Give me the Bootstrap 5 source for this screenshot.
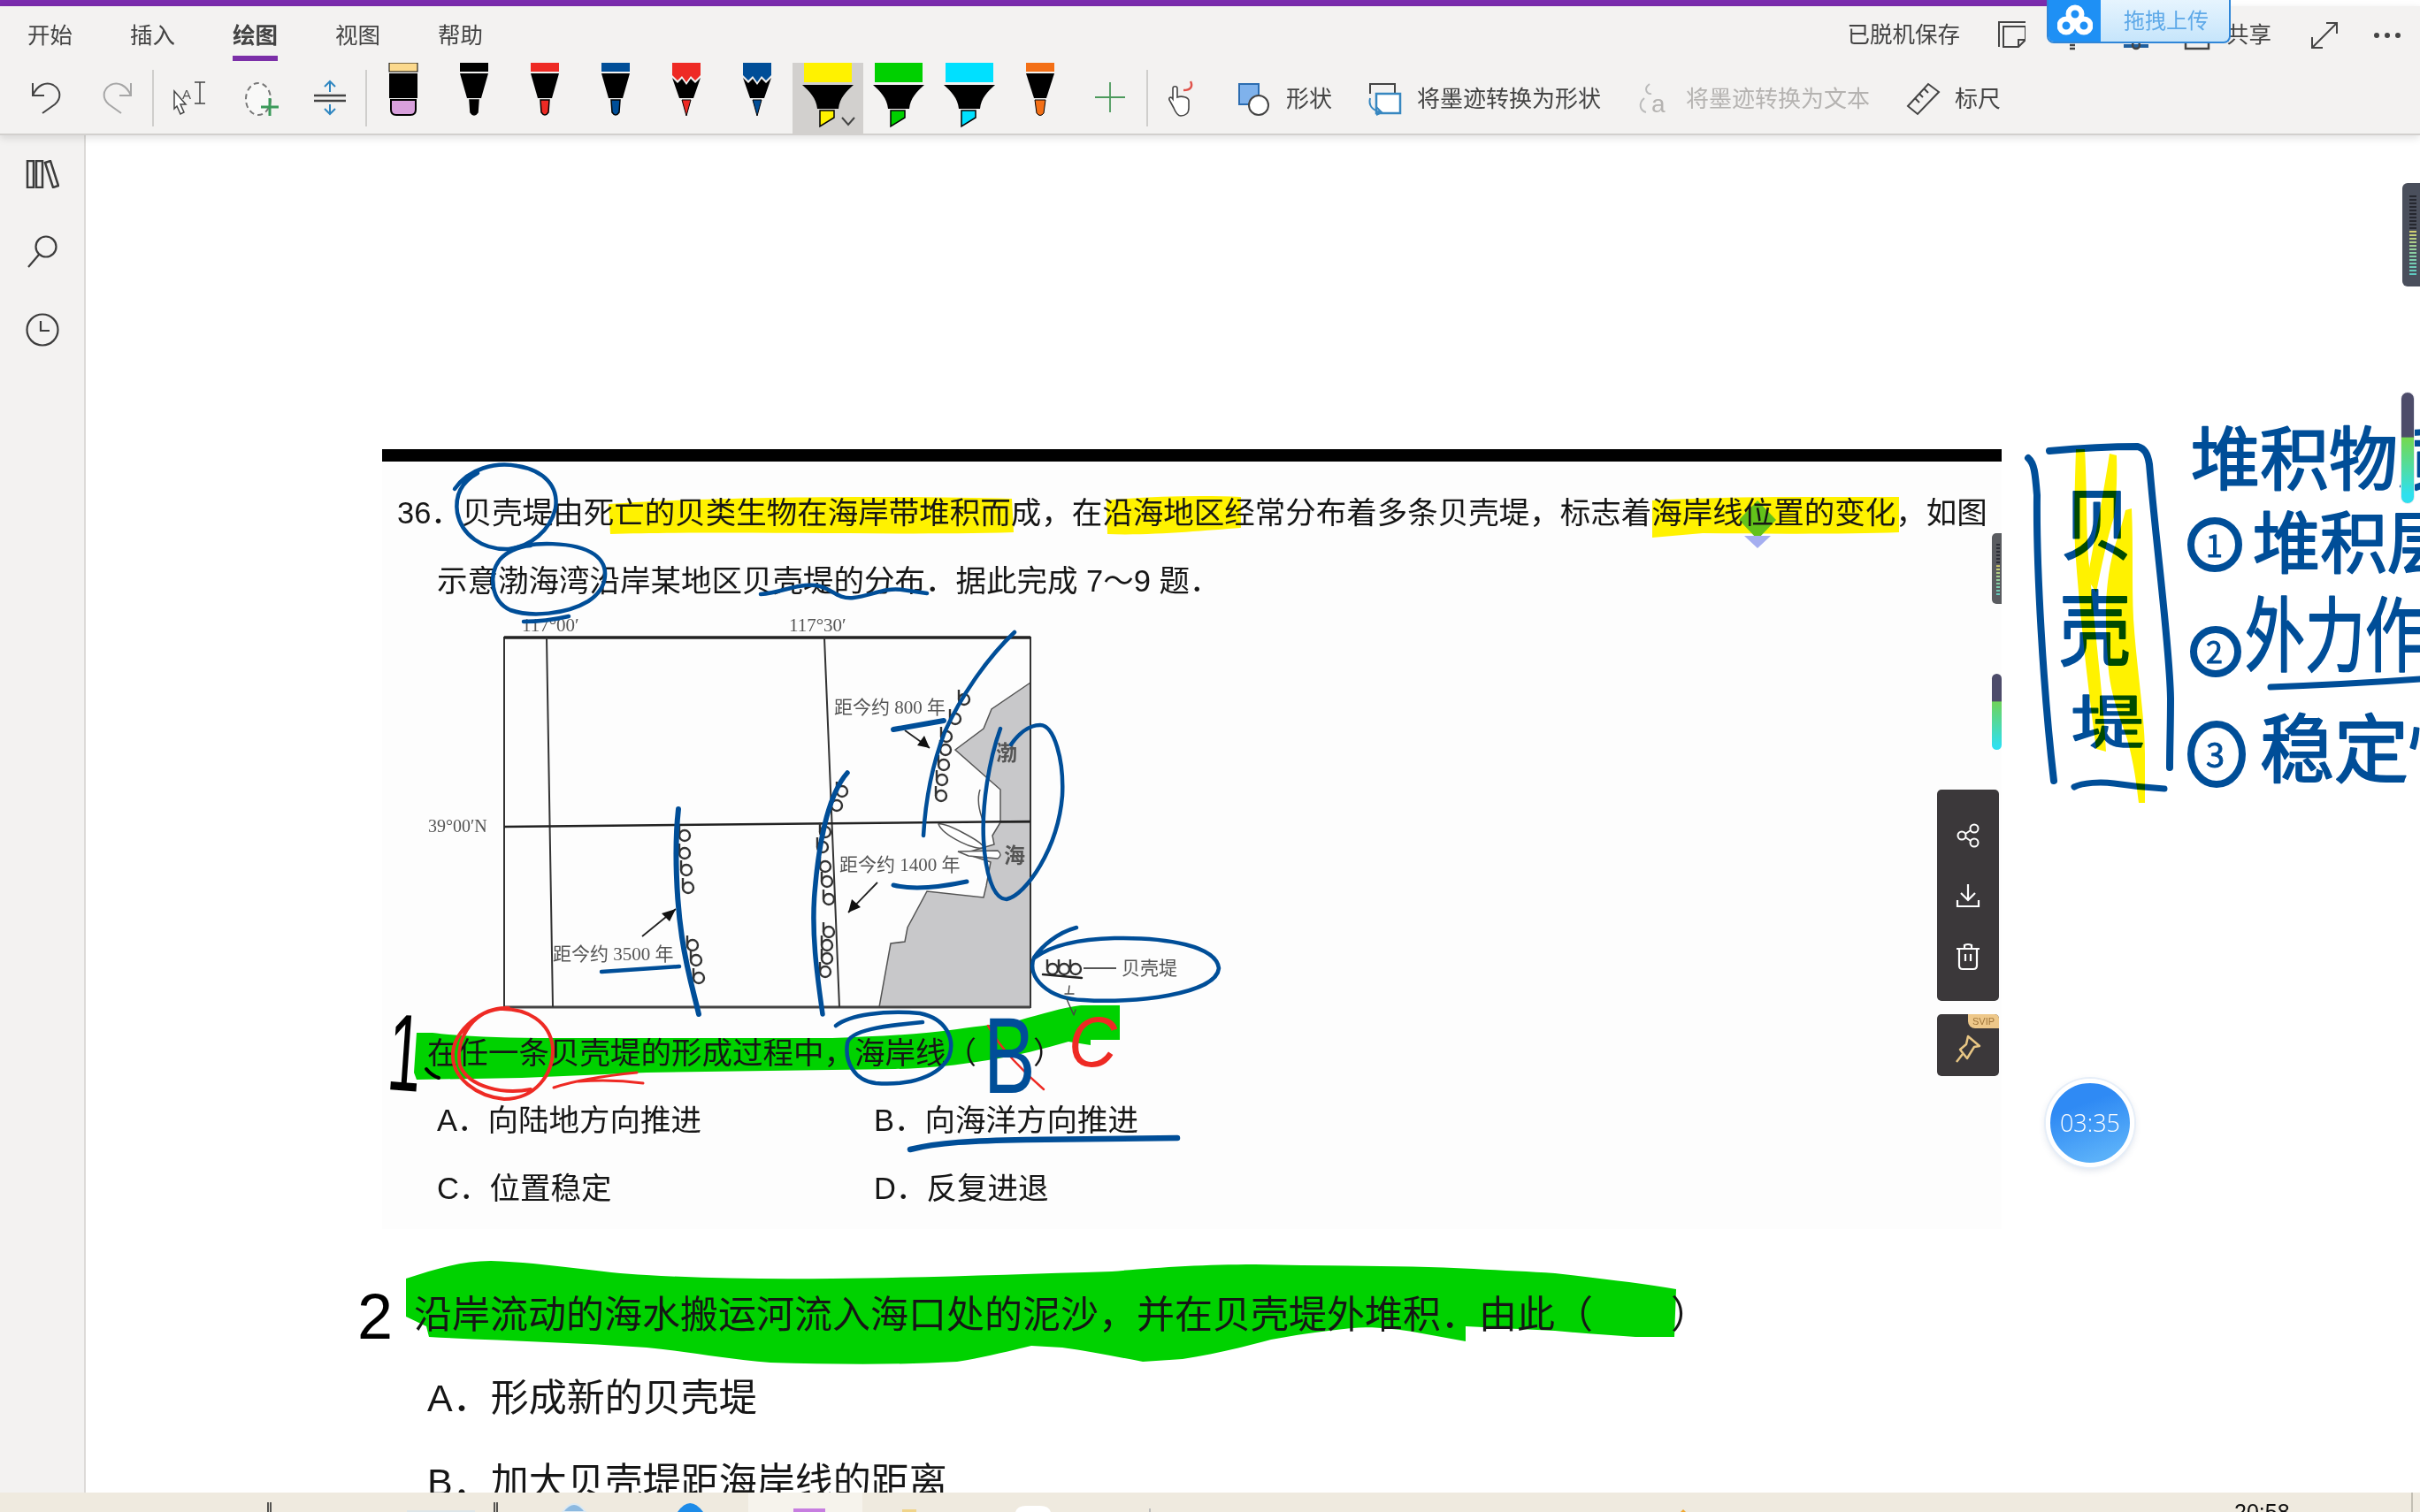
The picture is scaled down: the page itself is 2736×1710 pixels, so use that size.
<!DOCTYPE html>
<html lang="zh-CN">
<head>
<meta charset="UTF-8">
<title>OneNote</title>
<link rel="stylesheet" href="https://cdn.jsdelivr.net/npm/bootstrap@5.3.3/dist/css/bootstrap.min.css">
<style>
    html, body { width: 2736px; height: 1710px; overflow: hidden; background: #fff; }
    body { font-family: "Liberation Sans", "Noto Sans CJK SC", sans-serif; color: #444; }
    svg { display: block; }

    .app-shell { width: 2736px; height: 1710px; position: relative; }
    .top-strip { height: 7px; width: 2320px; background: #7b2cae; }
    .ribbon { height: 146px; background: #f3f2f1; border-bottom: 2px solid #d2d0ce; box-shadow: 0 3px 9px rgba(0,0,0,.12); position: relative; z-index: 3; }
    .ribbon-tabs { height: 64px; padding-left: 31px; padding-top: 2px; font-size: 25.5px; }
    .tab-list { gap: 65px; }
    .tab-list .nav-link { padding: 0; color: #444; line-height: 40px; position: relative; }
    .tab-list .nav-link.current { font-weight: 700; }
    .tab-list .nav-link.current::after { content: ""; position: absolute; left: 0; right: 0; top: 43px; height: 6px; background: #7b2fa8; }
    .window-tools { padding-right: 22px; font-size: 25.5px; line-height: 1; }
    .saved-note { margin-right: 42px; }
    .expand-gap { margin: 0 41px 0 45px; }
    .ribbon-tools { height: 80px; }
    .tool-labels { gap: 42px; margin-left: 30px; padding-top: 2px; font-size: 26px; color: #444; }
    .tool-labels .off { color: #b5b3b1; }
    .tool-labels svg { overflow: visible; }
    .tool-item { gap: 18px; }

    .workspace { height: 1535px; }
    .side-rail { width: 97px; background: #f3f2f1; border-right: 2px solid #dcdad8; }
    .rail-btn { height: 88px; }
    .note-canvas { width: 2639px; height: 1535px; position: relative; overflow: hidden; background: #fff; }
    .ink-layer { position: absolute; left: 0; top: 0; pointer-events: none; }
    .ink-layer text { font-family: "Noto Sans CJK SC", sans-serif; }
    .ink-layer .latin-ink text { font-family: "Liberation Sans", sans-serif; }
    .marker-layer { mix-blend-mode: multiply; }

    .doc-sheet { position: absolute; left: 335px; top: 355px; width: 1831px; height: 1180px; color: #161616; font-family: "Liberation Sans", "Noto Sans CJK SC", sans-serif; }
    .doc-rule { height: 14px; background: #000; }
    .q-line { font-size: 34.5px; line-height: 77px; white-space: nowrap; }
    .q-first { margin-top: 20px; padding-left: 17px; }
    .q-second { padding-left: 62px; }
    .q-stem { padding-left: 51px; line-height: 75px; }
    .q-opts { padding-left: 62px; }
    .q-opts > div { width: 494px; }
    .paren-gap { display: inline-block; width: 64px; }
    .q-big { font-size: 43px; line-height: 95px; white-space: nowrap; }
    .q-big-stem { margin-top: 58px; line-height: 93px; padding-left: 36px; }
    .q-big-opt { padding-left: 51px; }
    .paren-gap-big { display: inline-block; width: 88px; }
    .map-art { margin-top: -2px; margin-bottom: 2px; }
    .map-art text { font-family: "Liberation Serif", "Noto Sans CJK SC", serif; fill: #555; }

    .float-panel { position: absolute; left: 2093px; width: 70px; background: #3b383a; border-radius: 5px; z-index: 2; }
    .panel-actions { top: 740px; height: 239px; padding: 37px 0 34px; }
    .panel-pin { top: 994px; height: 70px; }
    .svip-tag { position: absolute; right: 0; top: 0; width: 35px; height: 16px; background: #eec88a; border-radius: 0 5px 0 8px; color: #a0763c; font: 11px/16px "Liberation Sans", sans-serif; text-align: center; }
    .timer-ball { position: absolute; left: 2216px; top: 1067px; width: 100px; height: 100px; border-radius: 50%; border: 5px solid #fff; background: linear-gradient(160deg, #2f8af4 30%, #5ab0f9 85%); box-shadow: 0 0 0 2px #e6eef8, 0 3px 8px rgba(60,90,140,.2); color: #fff; font: 300 27px/90px "Open Sans", sans-serif; text-align: center; z-index: 2; }
    .meter { position: absolute; z-index: 2; }
    .meter-doc-a { left: 2155px; top: 450px; width: 11px; height: 80px; background: #5a5c60; border-radius: 5px 0 0 5px; }
    .meter-doc-a::after { content: ""; position: absolute; left: 5px; top: 12px; width: 4px; height: 60px; background: repeating-linear-gradient(transparent 0 2px, #5a5c60 2px 4px), linear-gradient(#2c2e36 40%, #d8cf6a 41%, #8fd0a0 70%, #5cc8c0); }
    .meter-doc-b { left: 2155px; top: 609px; width: 11px; height: 86px; border-radius: 6px; background: linear-gradient(#4d4c6a 36%, #6fd35a 37%, #2fe0ee 95%); }
    .meter-side-a { left: 2619px; top: 54px; width: 20px; height: 117px; background: #4a4f5c; border-radius: 6px 0 0 6px; }
    .meter-side-a::after { content: ""; position: absolute; left: 8px; top: 14px; width: 8px; height: 90px; background: repeating-linear-gradient(transparent 0 2px, #4a4f5c 2px 4px), linear-gradient(#262830 42%, #d8cf6a 43%, #8fd0a0 70%, #5cc8c0); }
    .meter-side-b { left: 2617px; top: 290px; width: 16px; height: 127px; border-radius: 8px; background: linear-gradient(#4d4c6a 40%, #74d94f 41%, #2fe0ee 92%); border: 1px solid #e8e8ee; }

    .drop-box { position: absolute; left: 2314px; top: 0; width: 208px; height: 49px; border: 2px solid #2f86d8; border-top: 0; border-radius: 0 0 8px 8px; overflow: hidden; z-index: 5; background: linear-gradient(#e6f4fe, #c6e5fb); color: #5ea9e8; font-size: 24px; }
    .drop-icon { width: 59px; background: #1e90f5; }
    .drop-label { padding-left: 26px; }

    .task-strip { height: 22px; background: #efeadf; position: relative; z-index: 3; }
    .task-strip text { font-family: "Liberation Sans", sans-serif; }
</style>
</head>
<body>
<div class="app-shell d-flex flex-column">
    <div class="top-strip"></div>

    <header class="ribbon">
        <div class="ribbon-tabs d-flex align-items-center">
            <ul class="nav tab-list">
                <li class="nav-item"><a class="nav-link" href="#">开始</a></li>
                <li class="nav-item"><a class="nav-link" href="#">插入</a></li>
                <li class="nav-item"><a class="nav-link current" href="#">绘图</a></li>
                <li class="nav-item"><a class="nav-link" href="#">视图</a></li>
                <li class="nav-item"><a class="nav-link" href="#">帮助</a></li>
            </ul>
            <div class="window-tools ms-auto d-flex align-items-center">
                <span class="saved-note">已脱机保存</span>
                <svg width="32" height="32" viewBox="2258 23 32 32" fill="none" stroke="#444" stroke-width="2">
                    <path d="M2260 52V24H2290M2265 52V29H2290V44L2282 52Z"/><path d="M2282 52V44H2290"/>
                </svg>
                <svg width="227" height="64" viewBox="2295 7 227 64" fill="none" stroke="#444" stroke-width="2.5">
                    <path d="M2345 50H2351M2345 54H2351"/><path d="M2406 51H2434" stroke="#1f5f9e" stroke-width="4"/><circle cx="2420" cy="50" r="4"/><path d="M2476 46V54H2502V46"/>
                </svg>
                <span>共享</span>
                <svg class="expand-gap" width="30" height="30" viewBox="2613 24 30 30" fill="none" stroke="#444" stroke-width="2">
                    <path d="M2614 53L2642 25M2630 25H2642V37M2614 41V53H2626"/>
                </svg>
                <svg width="30" height="8" viewBox="2684 34 30 8" fill="#444">
                    <circle cx="2687" cy="38" r="3"/><circle cx="2699" cy="38" r="3"/><circle cx="2711" cy="38" r="3"/>
                </svg>
            </div>
        </div>

        <div class="ribbon-tools d-flex align-items-center">
            <svg width="1370" height="80" viewBox="0 71 1370 80">
                <defs>
                    <symbol id="pen-fine" viewBox="0 0 32 60" width="32" height="60" overflow="visible">
                        <rect x="0" y="0" width="32" height="10" fill="currentColor"/>
                        <path d="M0 12H32L24 40H8Z" fill="#000"/>
                        <path d="M11 42H21L20 56Q16 62 12 56Z" fill="currentColor" stroke="#000" stroke-width="1.5"/>
                    </symbol>
                    <symbol id="pen-rough" viewBox="0 0 32 60" width="32" height="60" overflow="visible">
                        <path d="M0 0H32V14L26 20L21 15L16 22L11 15L6 20L0 14Z" fill="currentColor"/>
                        <path d="M0 17L6 23L11 18L16 25L21 18L26 23L32 17L24 40H8Z" fill="#000"/>
                        <path d="M11 42H21L16 60Z" fill="currentColor" stroke="#000" stroke-width="1"/>
                    </symbol>
                    <symbol id="pen-marker" viewBox="0 0 58 72" width="58" height="72" overflow="visible">
                        <rect x="2" y="0" width="54" height="22" fill="currentColor"/>
                        <path d="M0 25H58C50 32 42 40 41 52H17C16 40 8 32 0 25Z" fill="#000"/>
                        <path d="M20 54H36V62L20 72Z" fill="currentColor" stroke="#000" stroke-width="1.5"/>
                    </symbol>
                </defs>
                <!-- undo, redo -->
                <path d="M37 94V108H50M37 108C42 96 52 92 60 96C70 102 69 112 62 118L48 128" fill="none" stroke="#444" stroke-width="2"/>
                <path d="M148 94V108H135M148 108C143 96 133 92 125 96C115 102 116 112 123 118L137 128" fill="none" stroke="#a6a6a6" stroke-width="2"/>
                <path d="M173 79V143M414 79V143M1297 79V143" stroke="#c4c2c0" stroke-width="1.5"/>
                <!-- select, lasso, insert space -->
                <path d="M197 103L210 118H204L208 127L204 129L200 120L197 123Z" fill="#fff" stroke="#444" stroke-width="1.5"/>
                <text x="206" y="112" font-family="Liberation Sans" font-size="15" fill="#555">A</text>
                <path d="M220 93H232M226 93V117M220 117H232" stroke="#444" stroke-width="1.5"/>
                <ellipse cx="292" cy="112" rx="14" ry="18" fill="#f9f9f8" stroke="#777" stroke-width="2" stroke-dasharray="6 4"/>
                <path d="M305 111V131M295 121H315" stroke="#3b9a5a" stroke-width="3"/>
                <path d="M355 108H391M355 114H391" stroke="#444" stroke-width="2.5"/>
                <path d="M373 92V104M367 98L373 92L379 98M373 118V129M367 123L373 129L379 123" fill="none" stroke="#2e86c1" stroke-width="2"/>
                <!-- pens -->
                <rect x="440" y="71" width="32" height="10" fill="#fbd98d" stroke="#000" stroke-width="1"/>
                <rect x="440" y="83" width="32" height="28" fill="#000"/>
                <path d="M442 113H470V124Q470 130 464 130H448Q442 130 442 124Z" fill="#d8a0dc" stroke="#000" stroke-width="2"/>
                <use href="#pen-fine" x="520" y="71" color="#000"/>
                <use href="#pen-fine" x="600" y="71" color="#ee2a24"/>
                <use href="#pen-fine" x="680" y="71" color="#004e98"/>
                <use href="#pen-rough" x="760" y="71" color="#ee2a24"/>
                <use href="#pen-rough" x="840" y="71" color="#004e98"/>
                <rect x="896" y="71" width="80" height="80" fill="#d2d0ce"/>
                <use href="#pen-marker" x="907" y="71" color="#fff200"/>
                <path d="M952 133L959 141L966 133" fill="none" stroke="#444" stroke-width="2"/>
                <use href="#pen-marker" x="987" y="71" color="#00d000"/>
                <use href="#pen-marker" x="1067" y="71" color="#00e0ff"/>
                <rect x="1160" y="71" width="32" height="10" fill="#f36f16"/>
                <path d="M1160 83H1192L1183 111H1169Z" fill="#000"/>
                <path d="M1170 113H1182L1180 128Q1176 133 1172 128Z" fill="#f36f16" stroke="#000" stroke-width="1"/>
                <!-- add pen, touch -->
                <path d="M1255 93V127M1238 110H1272" stroke="#4c9a5c" stroke-width="1.8"/>
                <path d="M1327 122L1322 113C1321 110 1324 109 1326 112V100C1326 97 1331 97 1331 100V110C1336 108 1344 110 1344 114V122C1344 128 1340 131 1335 131C1331 131 1329 127 1327 122Z" fill="#fff" stroke="#444" stroke-width="1.6"/>
                <path d="M1346 92C1349 98 1346 102 1338 102" fill="none" stroke="#e0524a" stroke-width="2.5"/>
            </svg>

            <div class="tool-labels d-flex align-items-center">
                <div class="tool-item d-flex align-items-center">
                    <svg width="36" height="36" viewBox="1400 93 36 36">
                        <rect x="1401" y="94" width="22" height="23" fill="#7fb2ec" stroke="#2b6cb0" stroke-width="2"/>
                        <circle cx="1423" cy="118" r="11" fill="#fff" stroke="#444" stroke-width="2"/>
                    </svg>
                    <span>形状</span>
                </div>
                <div class="tool-item d-flex align-items-center">
                    <svg width="36" height="36" viewBox="1548 93 36 36" fill="none">
                        <path d="M1549 105V94H1577V105" stroke="#444" stroke-width="2"/>
                        <rect x="1556" y="105" width="27" height="22" stroke="#3787c0" stroke-width="2.5" fill="#fff"/>
                        <path d="M1549 110C1547 118 1551 124 1562 126M1556 120L1562 126L1556 129" stroke="#3787c0" stroke-width="2"/>
                    </svg>
                    <span>将墨迹转换为形状</span>
                </div>
                <div class="tool-item d-flex align-items-center">
                    <svg width="36" height="36" viewBox="1853 93 36 36" fill="none">
                        <path d="M1866 94C1858 100 1864 106 1868 105M1860 110C1853 116 1855 124 1862 126" stroke="#bbb" stroke-width="2"/>
                        <text x="1868" y="126" font-family="Liberation Sans" font-size="28" fill="#b5b3b1">a</text>
                    </svg>
                    <span class="off">将墨迹转换为文本</span>
                </div>
                <div class="tool-item d-flex align-items-center">
                    <svg width="36" height="36" viewBox="2156 93 36 36" fill="none" stroke="#444" stroke-width="2">
                        <path d="M2180 94L2192 103L2168 128L2157 119Z"/><path d="M2175 99L2180 104M2170 105L2174 109M2165 110L2170 115"/>
                    </svg>
                    <span>标尺</span>
                </div>
            </div>
        </div>
    </header>

    <div class="drop-box d-flex">
        <div class="drop-icon d-flex align-items-center justify-content-center">
            <svg width="40" height="40" viewBox="2325 5 40 40">
                <circle cx="2345" cy="17" r="7.5" fill="none" stroke="#fff" stroke-width="6"/>
                <circle cx="2335" cy="30" r="7.5" fill="none" stroke="#fff" stroke-width="6"/>
                <circle cx="2355" cy="30" r="7.5" fill="none" stroke="#fff" stroke-width="6"/>
            </svg>
        </div>
        <div class="drop-label d-flex align-items-center">拖拽上传</div>
    </div>

    <div class="workspace d-flex">
        <aside class="side-rail d-flex flex-column">
            <div class="rail-btn d-flex align-items-center justify-content-center">
                <svg width="38" height="32" viewBox="29 181 38 32" fill="none" stroke="#3c3c3c" stroke-width="2.5">
                    <rect x="31" y="182" width="7" height="30"/><rect x="41" y="182" width="7" height="30"/>
                    <path d="M51 184L57 182L66 210L60 212Z"/>
                </svg>
            </div>
            <div class="rail-btn d-flex align-items-center justify-content-center">
                <svg width="36" height="38" viewBox="30 266 36 38" fill="none" stroke="#3c3c3c" stroke-width="2.2">
                    <circle cx="52" cy="279" r="11.5"/><path d="M44 288L32 302"/>
                </svg>
            </div>
            <div class="rail-btn d-flex align-items-center justify-content-center">
                <svg width="38" height="38" viewBox="29 354 38 38" fill="none" stroke="#3c3c3c" stroke-width="2.2">
                    <circle cx="48" cy="373" r="17.5"/><path d="M46 363V374H56"/>
                </svg>
            </div>
        </aside>

        <main class="note-canvas">
            <!-- highlighter strokes, under the page text -->
            <svg class="ink-layer" width="2639" height="1535" viewBox="97 153 2639 1535">
                <rect x="432" y="522" width="1831" height="868" fill="#fdfdfd"/>
                <g fill="#fff200">
                    <path d="M688 570C800 562 1000 560 1144 564L1146 602C1000 606 800 600 690 604Z"/>
                    <path d="M1251 566C1300 561 1360 560 1403 562L1403 597C1360 600 1300 606 1252 604Z"/>
                    <path d="M1868 566C1950 561 2060 562 2147 562L2147 602C2090 604 2000 604 1925 603L1868 608Z"/>
                </g>
                <path d="M1987 566L2008 588L1987 610L1966 588Z" fill="#63c21a"/>
                <path d="M1972 606H2002L1987 620Z" fill="#a5aef0"/>
                <g fill="#00d200">
                    <path d="M471 1168H489C520 1172 570 1174 626 1174L941 1174C990 1172 1040 1170 1082 1164C1110 1160 1130 1158 1152 1154C1180 1146 1200 1140 1222 1137H1266V1176H1233V1182L1208 1178C1180 1186 1150 1194 1117 1199C1080 1205 1050 1208 1012 1209L731 1213L590 1219L471 1221L468 1213Z"/>
                    <path d="M459 1446C490 1436 520 1426 555 1426C620 1428 680 1440 731 1442C800 1446 870 1447 941 1446C1050 1445 1150 1441 1257 1438C1300 1434 1360 1430 1419 1430C1500 1432 1590 1431 1666 1435C1700 1437 1730 1438 1758 1440C1810 1446 1860 1452 1895 1458L1893 1512H1849C1820 1510 1790 1508 1758 1505L1657 1500V1517L1602 1507C1580 1503 1550 1500 1529 1502C1490 1506 1465 1510 1437 1515C1400 1525 1370 1532 1337 1537L1292 1540C1260 1534 1230 1528 1201 1524L1166 1522C1140 1528 1110 1536 1082 1540C1010 1544 940 1543 871 1541C820 1537 775 1528 731 1524C650 1518 560 1516 485 1512L482 1500L459 1489Z"/>
                </g>
            </svg>

            <section class="doc-sheet">
                <div class="doc-rule"></div>
                <div class="q-line q-first">36．贝壳堤由死亡的贝类生物在海岸带堆积而成，在沿海地区经常分布着多条贝壳堤，标志着海岸线位置的变化，如图</div>
                <div class="q-line q-second">示意渤海湾沿岸某地区贝壳堤的分布．据此完成 7～9 题．</div>

                <svg class="map-art" id="mapArt" width="1000" height="458" viewBox="432 694 1000 458">
                    <polygon points="1165,772 1121,802 1112,824 1080,848 1131,893 1131,929 1165,929" fill="#c8c8ca" stroke="#555" stroke-width="1.5"/>
                    <polygon points="1165,930 1131,930 1122,945 1124,955 1090,965 1120,975 1115,1002 1112,1015 1048,1008 1026,1049 1023,1065 1007,1067 994,1139 1165,1139" fill="#c8c8ca" stroke="#555" stroke-width="1.5"/>
                    <path d="M1061 932C1070 930 1110 952 1112 958C1105 964 1066 945 1061 932Z" fill="#fff" stroke="#555" stroke-width="1.5"/>
                    <path d="M1083 963L1128 962Q1134 967 1128 971L1095 968Z" fill="#fff" stroke="#555" stroke-width="1.5"/>
                    <path d="M1108 893C1104 905 1108 920 1112 930" fill="none" stroke="#555" stroke-width="1.5"/>
                    <rect x="570" y="721" width="595" height="418" fill="none" stroke="#333" stroke-width="2"/>
                    <path d="M570 721H1165" stroke="#222" stroke-width="3.5"/>
                    <path d="M570 1139H1165" stroke="#444" stroke-width="3"/>
                    <path d="M618 721L625 1139M932 721L949 1139" stroke="#333" stroke-width="2"/>
                    <path d="M570 935L1165 929" stroke="#222" stroke-width="2.5"/>
                    <text x="590" y="714" font-size="21">117°00′</text>
                    <text x="892" y="714" font-size="21">117°30′</text>
                    <text x="484" y="941" font-size="20">39°00′N</text>
                    <text x="943" y="807" font-size="21">距今约 800 年</text>
                    <text x="949" y="985" font-size="21">距今约 1400 年</text>
                    <text x="625" y="1086" font-size="21">距今约 3500 年</text>
                    <text x="1268" y="1102" font-size="21">贝壳堤</text>
                    <text x="1126" y="860" font-size="24" font-weight="700">渤</text>
                    <text x="1135" y="976" font-size="24" font-weight="700">海</text>
                    <path d="M1023 826L1051 846M992 998L959 1032M726 1059L764 1028" stroke="#222" stroke-width="1.8"/>
                    <path d="M1051 846L1037 843L1045 832ZM959 1032L963 1017L973 1026ZM764 1028L757 1042L748 1033Z" fill="#111"/>
                    <path d="M1225 1095H1262" stroke="#555" stroke-width="2"/>
                    <g id="shellGroup" fill="none" stroke="#333" stroke-width="2.4"></g>
                </svg>

                <div class="q-line q-stem">在任一条贝壳堤的形成过程中，海岸线（<span class="paren-gap"></span>）</div>
                <div class="q-line q-opts d-flex"><div>A．向陆地方向推进</div><div>B．向海洋方向推进</div></div>
                <div class="q-line q-opts d-flex"><div>C．位置稳定</div><div>D．反复进退</div></div>
                <div class="q-big q-big-stem">沿岸流动的海水搬运河流入海口处的泥沙，并在贝壳堤外堆积．由此（<span class="paren-gap-big"></span>）</div>
                <div class="q-big q-big-opt">A．形成新的贝壳堤</div>
                <div class="q-big q-big-opt">B．加大贝壳堤距海岸线的距离</div>
            </section>

            <!-- pen strokes over the page -->
            <svg class="ink-layer" width="2639" height="1535" viewBox="97 153 2639 1535" fill="none" stroke-linecap="round" stroke-linejoin="round">
                <g stroke="#004e98" stroke-width="4.5">
                    <path d="M514 553C530 530 560 522 585 527C615 532 632 550 628 575C622 600 600 618 575 621C545 622 522 605 517 580C514 560 522 545 540 535"/>
                    <path d="M576 622C600 612 650 612 672 627C690 640 688 665 665 680C640 695 600 698 577 690C555 680 552 650 565 633C572 625 585 618 600 617M592 703C610 703 630 700 643 697"/>
                    <path d="M860 672C885 670 900 660 922 662C940 664 945 678 965 676C985 674 1000 664 1020 667L1048 671"/>
                    <path d="M1147 715C1115 745 1085 790 1068 828C1052 870 1046 910 1044 945"/>
                    <path d="M1010 825L1067 815" stroke-width="6"/>
                    <path d="M1131 824C1118 860 1110 910 1112 950C1114 985 1122 1017 1138 1017C1160 1012 1196 960 1201 900C1203 860 1192 820 1176 820C1162 820 1150 832 1143 842"/>
                    <path d="M1010 1001C1030 1006 1060 1004 1093 997" stroke-width="5"/>
                    <path d="M767 915C762 960 765 1020 771 1060C777 1100 785 1125 790 1147" stroke-width="6"/>
                    <path d="M958 874C935 900 925 960 921 1010C917 1060 925 1110 930 1147" stroke-width="5.5"/>
                    <path d="M680 1099L768 1093" stroke-width="4.5"/>
                    <path d="M1217 1049C1195 1055 1178 1070 1169 1083C1160 1105 1185 1130 1225 1131C1280 1135 1375 1125 1378 1095C1375 1070 1320 1060 1260 1061C1225 1062 1190 1068 1170 1083"/>
                    <path d="M945 1160C960 1148 1000 1142 1040 1146C1070 1152 1080 1175 1073 1195C1062 1217 1030 1228 990 1225C965 1222 955 1200 958 1180C960 1165 1000 1160 1043 1156"/>
                    <path d="M1029 1300C1060 1292 1100 1290 1160 1289L1331 1287" stroke-width="6.5"/>
                </g>
                <path d="M1179 1102L1223 1106" stroke="#222" stroke-width="2.5"/>
                <g stroke="#ee2a24" stroke-width="4">
                    <path d="M575 1140C545 1138 515 1165 512 1190C510 1220 540 1240 570 1243C605 1243 626 1215 625 1185C622 1155 595 1140 565 1141C530 1145 515 1180 520 1205C530 1230 570 1238 600 1232"/>
                    <path d="M626 1230C650 1222 690 1216 720 1213M654 1223C680 1221 705 1222 727 1225" stroke-width="3"/>
                    <path d="M1117 1160C1130 1185 1160 1215 1180 1232" stroke-width="2.5"/>
                </g>
                <path d="M482 1209C486 1214 490 1217 496 1219" stroke="#000" stroke-width="4"/>
                <path d="M2293 518C2300 524 2301 535 2303 560C2302 640 2310 780 2322 883" stroke="#004e98" stroke-width="8"/>
                <path d="M2317 510C2350 507 2390 505 2417 505C2424 507 2428 512 2430 525C2438 620 2453 730 2454 790C2454 820 2453 845 2453 868" stroke="#004e98" stroke-width="8"/>
                <path d="M2345 890C2355 885 2375 884 2390 886C2410 889 2430 891 2447 892" stroke="#004e98" stroke-width="7"/>
                <path d="M2567 777C2620 775 2680 772 2736 768" stroke="#004e98" stroke-width="7"/>
                <g stroke="#004e98" stroke-width="8">
                    <circle cx="2504" cy="616" r="27"/>
                    <circle cx="2505" cy="737" r="25"/>
                    <ellipse cx="2506" cy="853" rx="29" ry="34"/>
                </g>
                <g fill="#004e98" stroke="#004e98" stroke-width="2">
                    <text x="0" y="0" font-size="88" transform="translate(2330 625) scale(.92 1)">贝</text>
                    <text x="0" y="0" font-size="92" transform="translate(2328 745) scale(.88 1)">壳</text>
                    <text x="0" y="0" font-size="76" transform="translate(2342 840) scale(1.08 .85)">堤</text>
                    <text x="2477" y="548" font-size="78">堆积物质</text>
                    <text x="2494" y="630" font-size="34" stroke-width="1">1</text>
                    <text x="2547" y="642" font-size="76">堆积层</text>
                    <text x="2494" y="750" font-size="34" stroke-width="1">2</text>
                    <text x="0" y="0" font-size="92" transform="translate(2538 752) scale(.74 1)">外力作用</text>
                    <text x="2494" y="868" font-size="38" stroke-width="1">3</text>
                    <text x="2555" y="878" font-size="84">稳定性</text>
                </g>
                <g class="latin-ink" stroke="none">
                    <text x="0" y="0" font-size="124" fill="#000" transform="translate(436 1232) rotate(4) scale(.55 1)">1</text>
                    <text x="404" y="1514" font-size="72" fill="#000">2</text>
                    <text x="0" y="0" font-size="122" fill="#004e98" transform="translate(1112 1236) scale(.72 1)">B</text>
                    <text x="0" y="0" font-size="80" font-style="italic" fill="#ee2a24" transform="translate(1208 1206) scale(.95 1)">C</text>
                </g>
                <path d="M1208 1123L1209 1115M1204 1124H1214M1206 1130L1214 1148L1216 1142" stroke="#444" stroke-width="1.4"/>
            </svg>

            <!-- yellow marker across the handwritten note -->
            <svg class="ink-layer marker-layer" width="2639" height="1535" viewBox="97 153 2639 1535">
                <g fill="#fff200">
                    <path d="M2347 508H2357C2360 560 2358 600 2362 640C2368 710 2378 790 2381 850L2370 847C2362 790 2352 700 2347 633C2344 600 2346 540 2347 508Z"/>
                    <path d="M2385 513L2393 515C2394 545 2392 570 2390 585C2382 610 2376 640 2370 670L2360 655C2366 620 2378 560 2385 513Z"/>
                    <path d="M2403 577L2410 575C2412 620 2410 660 2412 700C2416 760 2425 810 2425 853L2425 908H2418C2414 870 2408 845 2403 830C2392 800 2384 775 2383 745C2380 700 2380 680 2384 650C2388 620 2398 600 2403 577Z"/>
                </g>
            </svg>

            <div class="meter meter-side-a"></div>
            <div class="meter meter-doc-a"></div>
            <div class="meter meter-doc-b"></div>
            <div class="meter meter-side-b"></div>

            <div class="float-panel panel-actions d-flex flex-column align-items-center justify-content-between">
                <svg width="30" height="30" viewBox="0 0 30 30" fill="none" stroke="#fff" stroke-width="2">
                    <circle cx="22" cy="7" r="4.5"/><circle cx="8" cy="15" r="4.5"/><circle cx="22" cy="23" r="4.5"/><path d="M12 13L18 9M12 17L18 21"/>
                </svg>
                <svg width="30" height="30" viewBox="0 0 30 30" fill="none" stroke="#fff" stroke-width="2.2">
                    <path d="M15 2V19M7 12L15 20L23 12M3 20V27H27V20"/>
                </svg>
                <svg width="30" height="32" viewBox="0 0 30 32" fill="none" stroke="#fff" stroke-width="2.2">
                    <path d="M2 7H28M11 7V3Q15 1 19 3V7M5 7V26Q5 30 9 30H21Q25 30 25 26V7M12 13V21M18 13V21"/>
                </svg>
            </div>
            <div class="float-panel panel-pin d-flex align-items-center justify-content-center">
                <span class="svip-tag">SVIP</span>
                <svg class="mt-2" width="30" height="32" viewBox="0 0 30 32" fill="none" stroke="#e8c684" stroke-width="2.5" stroke-linejoin="round">
                    <path d="M15 2L28 13L22 14L17 22L14 27L6 17L13 11Z"/><path d="M9 22L2 31"/>
                </svg>
            </div>
            <div class="timer-ball">03:35</div>
        </main>
    </div>

    <footer class="task-strip">
        <svg width="2736" height="22" viewBox="0 1688 2736 22">
            <rect x="846" y="1688" width="129" height="22" fill="#f6f3ec"/>
            <path d="M303 1699V1710M306 1699V1710M559 1699V1710M562 1699V1710" stroke="#222" stroke-width="1.5"/>
            <rect x="460" y="1708" width="77" height="2" fill="#dde5e8"/>
            <path d="M636 1710Q649 1692 662 1710Z" fill="#8cb9e0" stroke="#dbe9f3" stroke-width="2"/>
            <path d="M766 1710Q780 1690 795 1710Z" fill="#1d8be8"/>
            <rect x="897" y="1706" width="36" height="4" fill="#c77ee0"/>
            <path d="M1020 1710V1707H1036V1710Z" fill="#f0d48a"/>
            <path d="M1148 1710Q1150 1703 1160 1703H1176Q1186 1703 1188 1710Z" fill="#fff"/>
            <path d="M1300 1706V1710" stroke="#bbb" stroke-width="2"/>
            <path d="M1903 1707L1906 1710H1900Z" fill="#f0a830"/>
            <text x="2526" y="1719" font-size="25" fill="#111">20:58</text>
            <path d="M2727 1688V1710" stroke="#b5b1a6" stroke-width="1.5"/>
        </svg>
    </footer>
</div>

<script src="https://cdn.jsdelivr.net/npm/bootstrap@5.3.3/dist/js/bootstrap.bundle.min.js"></script>
<script>
    // shell marks on the map, page coordinates
    const shells = [
        [1090,791],[1080,813],[1070,833],[1069,848],[1067,865],[1065,882],[1064,900],
        [952,895],[946,911],[933,941],[930,958],[933,980],[935,997],[937,1017],[937,1054],[935,1069],[935,1084],[933,1099],
        [774,945],[774,965],[776,984],[778,1004],[783,1069],[787,1086],[790,1106],
        [1190,1096],[1203,1096],[1216,1096]
    ];
    const shellGroup = document.getElementById('shellGroup');
    shells.forEach(function (s) {
        const c = document.createElementNS('http://www.w3.org/2000/svg', 'circle');
        c.setAttribute('cx', s[0]);
        c.setAttribute('cy', s[1]);
        c.setAttribute('r', 6);
        shellGroup.appendChild(c);
        const t = document.createElementNS('http://www.w3.org/2000/svg', 'path');
        t.setAttribute('d', `M${s[0] - 6} ${s[1]}V${s[1] - 11}`);
        shellGroup.appendChild(t);
    });
</script>
</body>
</html>
